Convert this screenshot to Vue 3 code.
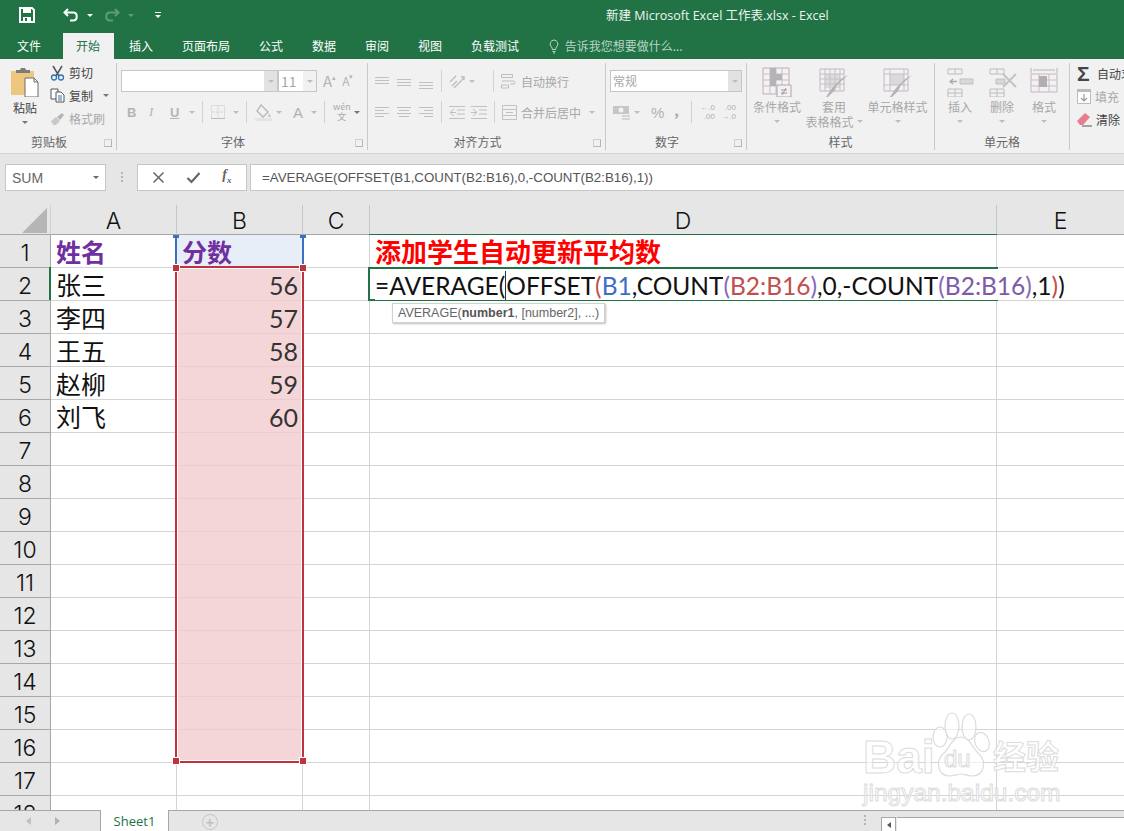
<script setup>
const tabs = ['插入', '页面布局', '公式', '数据', '审阅', '视图', '负载测试']
const columns = [
  { name: 'A', cls: 'col-a' },
  { name: 'B', cls: 'col-b' },
  { name: 'C', cls: 'col-c' },
  { name: 'D', cls: 'col-d' },
  { name: 'E', cls: 'col-e' },
]
const names = ['姓名', '张三', '李四', '王五', '赵柳', '刘飞']
const scores = ['分数', '56', '57', '58', '59', '60']
const rows = []
for (let i = 0; i < 18; i++) {
  rows.push({ num: i + 1, name: names[i] || '', score: scores[i] || '' })
}
const formula = [
  { t: '=AVERAGE(', c: 'k' },
  { t: 'OFFSET', c: 'k' },
  { t: '(', c: 'r' },
  { t: 'B1', c: 'b' },
  { t: ',COUNT', c: 'k' },
  { t: '(', c: 'p' },
  { t: 'B2:B16', c: 'r' },
  { t: ')', c: 'p' },
  { t: ',0,-COUNT', c: 'k' },
  { t: '(', c: 'p' },
  { t: 'B2:B16', c: 'r2' },
  { t: ')', c: 'p' },
  { t: ',1', c: 'k' },
  { t: ')', c: 'r' },
  { t: ')', c: 'k' },
]
</script>

<template>
  <div class="excel">
    <div class="titlebar">
      <svg class="qat save" width="16" height="16" viewBox="0 0 16 16">
        <path d="M1 1h12l2 2v12H1z" fill="none" stroke="#fff" stroke-width="2" />
        <path d="M4 1h8v5H4zM4 10h8v5H4z" fill="#fff" />
        <path d="M6 11h2v3H6z" fill="#217346" />
      </svg>
      <svg class="qat undo" width="16" height="14" viewBox="0 0 16 14">
        <path d="M5 1 1.500 4.500 5 8M2 4.500h8c5 0 5 8 0 8H7" fill="none" stroke="#fff" stroke-width="2" />
      </svg>
      <span class="tri white small-gap"></span>
      <svg class="qat redo" width="16" height="14" viewBox="0 0 16 14">
        <path d="M11 1l3.500 3.500L11 8M14 4.500H6c-5 0-5 8 0 8h3" fill="none" stroke="#5c9c7c" stroke-width="2" />
      </svg>
      <span class="tri dim small-gap"></span>
      <svg class="qat custom" width="8" height="8" viewBox="0 0 8 8">
        <path d="M1 1h6v1H1zM1 4h6L4 7z" fill="#fff" />
      </svg>
      <div class="doc-title">新建 Microsoft Excel 工作表.xlsx - Excel</div>
    </div>

    <div class="tabbar">
      <span class="tab file">文件</span>
      <span class="tab active">开始</span>
      <span v-for="t in tabs" :key="t" class="tab">{{ t }}</span>
      <svg class="bulb" width="10" height="15" viewBox="0 0 10 15">
        <path d="M5 1a4 4 0 0 0-2.500 7c.6.6.8 1.300.8 2.500h3.400c0-1.200.2-1.900.8-2.500A4 4 0 0 0 5 1zM3.500 12.500h3M4 14h2" fill="none" stroke="#b9d5c6" stroke-width="1" />
      </svg>
      <span class="tell">告诉我您想要做什么...</span>
    </div>

    <div class="ribbon">
      <div class="group g-clip">
        <div class="body clip-body">
          <div class="big paste">
            <svg width="30" height="30" viewBox="0 0 30 30">
              <path d="M1 4h23v24H1z" fill="#eec77f" />
              <path d="M6 3h4l1-2h4l1 2h4v3H6z" fill="#7b7b7b" />
              <path d="M15 11h9l4 4v15H15z" fill="#fff" stroke="#6d6d6d" />
              <path d="M24 11v4h4" fill="none" stroke="#6d6d6d" />
            </svg>
            <span class="t-on">粘贴</span>
            <span class="tri"></span>
          </div>
          <div class="clip-list">
            <div class="line">
              <svg width="15" height="16" viewBox="0 0 15 16">
                <path d="M3 1l6 10M12 1 6 11" stroke="#555" stroke-width="1.500" fill="none" />
                <circle cx="4" cy="12.500" r="2.500" fill="none" stroke="#2f74b5" stroke-width="1.300" />
                <circle cx="11" cy="12.500" r="2.500" fill="none" stroke="#2f74b5" stroke-width="1.300" />
              </svg>
              <span class="t-on">剪切</span>
            </div>
            <div class="line">
              <svg width="15" height="15" viewBox="0 0 15 15">
                <path d="M1 1h7v10H1z" fill="#fff" stroke="#555" />
                <path d="M6 4h5l3 3v7H6z" fill="#fff" stroke="#555" />
                <path d="M8 8h4M8 10h4M8 12h4" stroke="#2f74b5" />
              </svg>
              <span class="t-on">复制</span>
              <span class="tri copy-arrow"></span>
            </div>
            <div class="line">
              <svg width="15" height="14" viewBox="0 0 15 14">
                <path d="M1 9l5-4 4 4-4 4H3z" fill="#c9c9c9" />
                <path d="M7 5l5-4 2 2-4 5z" fill="#b4b4b4" />
              </svg>
              <span class="t-off">格式刷</span>
            </div>
          </div>
        </div>
        <div class="glabel side">剪贴板</div>
        <span class="launch"></span>
      </div>

      <div class="group g-font">
        <div class="body">
          <div class="row r1 font-r1">
            <div class="combo font-name"><span class="combo-text"></span><span class="combo-btn"><i class="tri off"></i></span></div>
            <div class="combo font-size"><span class="combo-text">11</span><span class="combo-btn plain"><i class="tri off"></i></span></div>
            <span class="glyph grow">A<sup>▴</sup></span>
            <span class="glyph shrink">A<sup>▾</sup></span>
          </div>
          <div class="row r2 font-r2">
            <b class="fmt">B</b>
            <i class="fmt serif">I</i>
            <u class="fmt">U</u>
            <span class="tri off"></span>
            <span class="sep"></span>
            <svg class="ico-border" width="14" height="14" viewBox="0 0 14 14">
              <path d="M.5.500h13v13H.5z" fill="none" stroke="#c8c8c8" stroke-dasharray="1 1" />
              <path d="M7 1v12M1 7h12" stroke="#c8c8c8" stroke-dasharray="1 1" />
              <path d="M0 13.500h14" stroke="#bdbdbd" />
            </svg>
            <span class="tri off"></span>
            <span class="sep"></span>
            <svg class="ico-fill" width="17" height="17" viewBox="0 0 17 17">
              <path d="M6 1l7 7-5 5-6-6z" fill="none" stroke="#b5b5b5" stroke-width="1.300" />
              <path d="M14 9l2 4h-3z" fill="#c4c4c4" />
              <path d="M0 14h17v3H0z" fill="#e4e4e4" />
            </svg>
            <span class="tri off"></span>
            <span class="font-a">A</span>
            <span class="tri off"></span>
            <span class="sep"></span>
            <span class="wen"><small>wén</small><small>文</small></span>
            <span class="tri"></span>
          </div>
        </div>
        <div class="glabel side">字体</div>
        <span class="launch"></span>
      </div>

      <div class="group g-align">
        <div class="body">
          <div class="row r1 align-r1">
            <svg class="al" width="14" height="8" viewBox="0 0 14 8"><path d="M0 .5h14M0 3.500h14M0 6.500h14" stroke="#c0c0c0" /></svg>
            <svg class="al mid" width="14" height="8" viewBox="0 0 14 8"><path d="M0 .5h14M0 3.500h14M0 6.500h14" stroke="#c0c0c0" /></svg>
            <svg class="al low" width="14" height="8" viewBox="0 0 14 8"><path d="M0 .5h14M0 3.500h14M0 6.500h14" stroke="#c0c0c0" /></svg>
            <span class="sep"></span>
            <svg width="17" height="15" viewBox="0 0 17 15"><path d="M1 8l6-6M3 12l5-5M5 14 15 4M12 3h3v3" fill="none" stroke="#bcbcbc" stroke-width="1.300" /></svg>
            <span class="tri off"></span>
            <span class="sep wide"></span>
            <svg width="16" height="15" viewBox="0 0 16 15"><path d="M.5.500h11v3H.5zM.5 11h7v3H.5z" fill="none" stroke="#bdbdbd" /><path d="M1 7h11c3 0 3 3 0 3H9" fill="none" stroke="#bdbdbd" /></svg>
            <span class="t-off">自动换行</span>
          </div>
          <div class="row r2 align-r2">
            <svg class="al" width="14" height="11" viewBox="0 0 14 11"><path d="M0 .5h14M0 3.500h9M0 6.500h14M0 9.500h9" stroke="#c0c0c0" /></svg>
            <svg class="al" width="14" height="11" viewBox="0 0 14 11"><path d="M0 .5h14M2 3.500h10M0 6.500h14M2 9.500h10" stroke="#c0c0c0" /></svg>
            <svg class="al" width="14" height="11" viewBox="0 0 14 11"><path d="M0 .5h14M5 3.500h9M0 6.500h14M5 9.500h9" stroke="#c0c0c0" /></svg>
            <span class="sep"></span>
            <svg width="16" height="13" viewBox="0 0 16 13"><path d="M0 .5h16M8 4h8M8 8h8M0 12.500h16M5 3 1 6.500 5 10M1 6.500h6" fill="none" stroke="#c0c0c0" /></svg>
            <svg width="16" height="13" viewBox="0 0 16 13"><path d="M0 .5h16M8 4h8M8 8h8M0 12.500h16M2 3l4 3.500L2 10M0 6.500h6" fill="none" stroke="#c0c0c0" /></svg>
            <span class="sep wide2"></span>
            <svg width="15" height="15" viewBox="0 0 15 15"><path d="M.5.500h14v14H.5zM1 4.500h13M1 10.500h13M4 7.500h7" fill="none" stroke="#c2c2c2" /></svg>
            <span class="t-off">合并后居中</span>
            <span class="tri off far"></span>
          </div>
        </div>
        <div class="glabel side">对齐方式</div>
        <span class="launch"></span>
      </div>

      <div class="group g-num">
        <div class="body">
          <div class="row r1 num-r1">
            <div class="combo num-fmt"><span class="combo-text t-off">常规</span><span class="combo-btn"><i class="tri off"></i></span></div>
          </div>
          <div class="row r2 num-r2">
            <svg width="17" height="15" viewBox="0 0 17 15"><path d="M0 1h16v8H0z" fill="#c6c6c6" /><circle cx="8" cy="5" r="2.500" fill="#f1f1f1" /><path d="M9 10h8v2H9zM9 13h8v2H9z" fill="#d4d4d4" /></svg>
            <span class="tri off"></span>
            <span class="pct">%</span>
            <span class="comma">,</span>
            <span class="sep"></span>
            <span class="dec"><small>←.0</small><small>.00</small></span>
            <span class="dec"><small>.00</small><small>→.0</small></span>
          </div>
        </div>
        <div class="glabel side">数字</div>
        <span class="launch"></span>
      </div>

      <div class="group g-style">
        <div class="body big-row">
          <div class="big b-cond">
            <svg width="30" height="30" viewBox="0 0 30 30">
              <path d="M1 1h26v26H1z" fill="#f4f0f4" stroke="#b8b0b8" />
              <path d="M1 7h26M1 13h26M1 19h26M8 1v26M14 1v26M20 1v26" stroke="#c6bfc6" />
              <path d="M8 1h6v6H8zM8 7h12v6H8zM8 13h6v6H8z" fill="#b4b4b4" />
              <path d="M15 18h14v12H15z" fill="#f4f0f4" stroke="#a8a8a8" />
              <path d="M19 23h6M19 26h6M24 21l-4 7" stroke="#999" />
            </svg>
            <span class="t-off">条件格式</span>
            <span class="tri off"></span>
          </div>
          <div class="big b-table">
            <svg width="30" height="30" viewBox="0 0 30 30">
              <path d="M1 2h24v22H1z" fill="#f4f0f4" stroke="#c0b8c0" />
              <path d="M6 7h15v14H6z" fill="#dcdcdc" />
              <path d="M1 7h24M1 12h24M1 17h24M6 2v22M11 2v22M16 2v22M21 2v22" stroke="#c6bfc6" />
              <path d="M29 8 18 18l-3 6-6 6h-2l6-9 9-9z" fill="#b4b4b4" />
            </svg>
            <span class="t-off">套用</span>
            <span class="t-off table-2">表格格式<i class="tri off"></i></span>
          </div>
          <div class="big b-cell">
            <svg width="30" height="30" viewBox="0 0 30 30">
              <path d="M1 2h24v22H1z" fill="#f4f0f4" stroke="#c0b8c0" />
              <path d="M7 7h14v11H7z" fill="#dcd8dc" />
              <path d="M1 7h24M1 18h24M7 2v22M21 2v22" stroke="#c6bfc6" />
              <path d="M29 8 18 18l-3 6-6 6h-2l6-9 9-9z" fill="#b4b4b4" />
            </svg>
            <span class="t-off">单元格样式</span>
            <span class="tri off"></span>
          </div>
        </div>
        <div class="glabel">样式</div>
      </div>

      <div class="group g-cells">
        <div class="body big-row cells-row">
          <div class="big cell-btn">
            <svg width="30" height="30" viewBox="0 0 30 30">
              <path d="M3 2h14v5H3zM3 22h14v8H3zM10 2v5M10 22v8M3 26h14" fill="none" stroke="#c0bac0" />
              <path d="M15 12h13v5H15z" fill="#d8d8d8" stroke="#bfbfbf" />
              <path d="M12 14.500H5M8 12l-3 2.500L8 17" fill="none" stroke="#aaa" stroke-width="1.300" />
            </svg>
            <span class="t-off">插入</span>
            <span class="tri off"></span>
          </div>
          <div class="big cell-btn">
            <svg width="30" height="30" viewBox="0 0 30 30">
              <path d="M3 2h14v5H3zM3 22h14v8H3zM10 2v5M10 22v8M3 26h14" fill="none" stroke="#c0bac0" />
              <path d="M9 12h9v5H9z" fill="#d8d8d8" stroke="#bfbfbf" />
              <path d="M16 7l13 13M29 7 16 20" stroke="#c4c4c4" stroke-width="2" />
            </svg>
            <span class="t-off">删除</span>
            <span class="tri off"></span>
          </div>
          <div class="big cell-btn">
            <svg width="30" height="30" viewBox="0 0 30 30">
              <path d="M2 1v5M28 1v5M4 3h22" stroke="#b4b4b4" />
              <path d="M2 7h26v18H2z" fill="#f4f0f4" stroke="#c0b8c0" />
              <path d="M2 13h26M2 19h26M10 7v18M20 7v18" stroke="#c6bfc6" />
              <path d="M10 9h8v11h-8z" fill="#b0b0b0" />
            </svg>
            <span class="t-off">格式</span>
            <span class="tri off"></span>
          </div>
        </div>
        <div class="glabel">单元格</div>
      </div>

      <div class="group g-edit">
        <div class="edit-list">
          <div class="line">
            <span class="sigma">Σ</span>
            <span class="t-on">自动求和</span>
          </div>
          <div class="line">
            <svg width="14" height="15" viewBox="0 0 14 15"><path d="M.5.500h13v14H.5z" fill="#fff" stroke="#bbb" /><path d="M0 0h14v3H0z" fill="#bbb" /><path d="M7 5v7M4 9l3 3 3-3" fill="none" stroke="#999" stroke-width="1.200" /></svg>
            <span class="t-off">填充</span>
          </div>
          <div class="line">
            <svg width="15" height="14" viewBox="0 0 15 14"><path d="M0 8l8-8 5 4-7 8H3z" fill="#e87d8e" /><path d="M5 13h10" stroke="#555" /></svg>
            <span class="t-on">清除</span>
          </div>
        </div>
      </div>
    </div>

    <div class="formula-zone">
      <div class="namebox"><span>SUM</span><i class="tri dark"></i></div>
      <div class="grip"></div>
      <div class="fx-box">
        <svg width="13" height="13" viewBox="0 0 13 13"><path d="M1.500 1.500l10 10M11.500 1.500l-10 10" stroke="#666" stroke-width="1.500" /></svg>
        <svg width="15" height="13" viewBox="0 0 15 13"><path d="M1.500 7l4 4 8-9" fill="none" stroke="#666" stroke-width="2.200" /></svg>
        <span class="fx">f<sub>x</sub></span>
      </div>
      <div class="formula-input">
        <span>=AVERAGE(OFFSET(B1,COUNT(B2:B16),0,-COUNT(B2:B16),1))</span>
      </div>
    </div>

    <div class="sheet">
      <div class="head-row">
        <div class="corner"><span class="corner-tri"></span></div>
        <div v-for="c in columns" :key="c.name" class="col-head" :class="c.cls">{{ c.name }}</div>
      </div>
      <div v-for="r in rows" :key="r.num" class="data-row">
        <div class="row-head">{{ r.num }}</div>
        <div class="cell col-a" :class="{ head: r.num === 1 }">{{ r.name }}</div>
        <div class="cell col-b" :class="{ head: r.num === 1, 'in-blue': r.num === 1, num: r.num > 1, 'in-red': r.num > 1 && r.num < 17 }">{{ r.score }}</div>
        <div class="cell col-c"></div>
        <div class="cell col-d" :class="{ caption: r.num === 1 }">{{ r.num === 1 ? '添加学生自动更新平均数' : '' }}</div>
        <div class="cell col-e"></div>
      </div>

      <div class="range-blue">
        <i class="h tl"></i><i class="h tr"></i>
      </div>
      <div class="range-red">
        <i class="h tl"></i><i class="h tr"></i><i class="h bl"></i><i class="h br"></i>
      </div>
      <div class="row-mark"></div>
      <div class="d-top"></div>
      <div class="editor">
        <span v-for="(f, i) in formula" :key="i" :class="['f-' + f.c, { caret: i === 1 }]">{{ f.t }}</span>
      </div>
      <div class="tip">AVERAGE(<b>number1</b>, [number2], ...)</div>

      <div class="watermark">
        <svg class="paw" width="62" height="66" viewBox="0 0 62 66">
          <g fill="rgba(255,255,255,.6)" stroke="#dcdcdc" stroke-width="1.200">
            <ellipse cx="10" cy="25" rx="7" ry="10" />
            <ellipse cx="22" cy="14" rx="7" ry="13" />
            <ellipse cx="39" cy="15" rx="7" ry="13" />
            <ellipse cx="52" cy="30" rx="7" ry="10" transform="rotate(-20 52 30)" />
            <path d="M31 25C22 25 20 36 13 42 5 50 8 64 20 64c5 0 7-2 11-2s6 2 11 2c12 0 15-14 7-22-7-6-9-17-18-17z" />
          </g>
        </svg>
        <span class="wm-bai">Bai</span>
        <span class="wm-du">du</span>
        <span class="wm-cn">经验</span>
        <span class="wm-url">jingyan.baidu.com</span>
      </div>
    </div>

    <div class="sheet-bar">
      <div class="nav"><span class="nav-l"></span><span class="nav-r"></span></div>
      <div class="sheet-tab">Sheet1</div>
      <div class="add"><span>+</span></div>
      <div class="bar-grip"></div>
      <div class="hscroll"><span class="left-btn"><i></i></span><span class="thumb"></span></div>
    </div>
  </div>
</template>

<style scoped>
.excel {
  width: 1124px;
  height: 831px;
  overflow: hidden;
  display: flex;
  flex-direction: column;
  background: #fff;
  font-family: "Noto Sans CJK SC", "Liberation Sans", sans-serif;
  font-size: 12px;
  position: relative;
}

/* title + tabs */
.titlebar {
  height: 33px;
  box-sizing: border-box;
  padding-bottom: 3px;
  background: #217346;
  display: flex;
  align-items: center;
  color: #fff;
  flex: none;
}
.qat { flex: none; }
.save { margin-left: 19px; }
.undo { margin-left: 28px; }
.redo { margin-left: 11px; }
.custom { margin-left: 20px; }
.small-gap { margin-left: 8px; }
.doc-title {
  margin-left: 444px;
  margin-bottom: 1px;
  font-family: "Open Sans", "Noto Sans CJK SC", sans-serif;
  font-size: 12.500px;
  white-space: nowrap;
  color: #eef5f1;
}
.tabbar {
  height: 26px;
  background: #217346;
  display: flex;
  align-items: stretch;
  flex: none;
  color: #fff;
  line-height: 25px;
}
.tab { padding: 0 14.500px; }
.tab.file { margin-left: 2.500px; margin-right: 7px; }
.tab.active {
  background: #f1f1f1;
  color: #217346;
  padding: 0 13.500px;
  margin-right: 1px;
  width: 51px;
  box-sizing: border-box;
}
.bulb { margin: 6px 6px 0 15px; }
.tell { color: #b9d5c6; }

/* ribbon */
.ribbon {
  height: 94px;
  flex: none;
  background: #f1f1f1;
  display: flex;
  color: #444;
  border-bottom: 1px solid #d4d4d4;
  box-sizing: content-box;
}
.group {
  position: relative;
  flex: none;
  box-sizing: border-box;
  height: 87px;
  margin-top: 4px;
  border-right: 1px solid #c8c8c8;
}
.body {
  height: 70px;
  box-sizing: border-box;
  display: flow-root;
}
.glabel {
  text-align: center;
  color: #666;
  line-height: 17px;
  white-space: nowrap;
}
.glabel.side { padding-right: 18px; }
.launch {
  position: absolute;
  right: 4px;
  bottom: 3px;
  width: 6px;
  height: 6px;
  border: 1px solid #b5b5b5;
  border-top-color: #d0d0d0;
  border-left-color: #d0d0d0;
}
.g-clip { width: 117px; }
.g-font { width: 251px; }
.g-align { width: 238px; }
.g-num { width: 141px; }
.g-style { width: 188px; }
.g-cells { width: 135px; }
.g-edit { flex: 1; border-right: none; }

.t-on { color: #444; white-space: nowrap; }
.t-off { color: #a8a8a8; white-space: nowrap; }

.tri {
  display: inline-block;
  flex: none;
  width: 0;
  height: 0;
  border-left: 3.500px solid transparent;
  border-right: 3.500px solid transparent;
  border-top: 3.500px solid #777;
}
.tri.off { border-top-color: #bdbdbd; }
.tri.white { border-top-color: #fff; }
.tri.dim { border-top-color: #5c9c7c; }
.tri.dark { border-top-color: #666; }

.big {
  display: flex;
  flex-direction: column;
  align-items: center;
  flex: none;
  line-height: 15px;
}
.big svg { height: 30px; margin-bottom: 2px; flex: none; }
.big .tri { margin-top: 6px; }
.big-row { display: flex; padding-top: 4px; }

.clip-body { display: flex; padding-top: 4px; }
.paste { width: 50px; }
.paste svg { margin-bottom: 3px; }
.clip-list { margin-top: -6px; }
.line {
  display: flex;
  align-items: center;
  gap: 4px;
  height: 23px;
}
.copy-arrow { margin-left: 6px; }

.row { display: flex; align-items: center; }
.r1 { height: 22px; margin-top: 7px; }
.r2 { height: 22px; margin-top: 9px; }

.combo {
  display: flex;
  height: 22px;
  box-sizing: border-box;
  border: 1px solid #c6c6c6;
  background: #fff;
  align-items: center;
  flex: none;
}
.combo-text { flex: 1; padding-left: 2px; color: #a8a8a8; font-size: 14px; line-height: 20px; overflow: hidden; }
.combo-btn {
  width: 13px;
  align-self: stretch;
  background: #e2e2e2;
  display: flex;
  align-items: center;
  justify-content: center;
}
.combo-btn.plain { background: #f1f1f1; }

.font-r1 { padding-left: 4px; }
.font-name { width: 157px; }
.font-size { width: 39px; }
.glyph { color: #b4b4b4; line-height: 20px; }
.glyph sup { font-size: 7px; vertical-align: 7px; line-height: 0; }
.grow { font-size: 15px; margin-left: 6px; }
.shrink { font-size: 12px; margin-left: 6px; }

.font-r2 { padding-left: 10px; }
.fmt {
  color: #b4b4b4;
  font-family: "Liberation Sans", sans-serif;
  font-size: 13px;
  width: 9px;
  font-weight: bold;
  margin-right: 13px;
}
.fmt.serif { font-family: "Liberation Serif", serif; font-weight: normal; font-style: italic; width: 8px; }
.font-r2 u { margin-right: 10px; }
.sep {
  width: 1px;
  height: 22px;
  background: #d2d2d2;
  margin: 0 8px 0 7px;
  flex: none;
}
.ico-border { margin-right: 8px; flex: none; }
.ico-fill { margin-right: 4px; flex: none; }
.font-a {
  color: #b0b0b0;
  font-size: 15px;
  font-family: "Liberation Sans", sans-serif;
  margin: 0 8px 0 11px;
}
.wen {
  display: flex;
  flex-direction: column;
  align-items: center;
  color: #a8a8a8;
  line-height: 10px;
  margin-right: 3px;
}
.wen small { font-size: 9px; }

.align-r1 { padding-left: 7px; }
.align-r2 { padding-left: 7px; }
.al { margin-right: 8px; flex: none; }
.al.mid { margin-top: 3px; }
.al.low { margin-top: 9px; }
.align-r1 .sep { margin-left: 0; margin-right: 7px; }
.align-r1 .tri { margin-left: 3px; }
.sep.wide { margin-left: 18px !important; }
.align-r1 .t-off, .align-r2 .t-off { margin-left: 4px; }
.align-r2 .sep { margin-left: 0; margin-right: 7px; }
.align-r2 svg + svg:not(.al) { margin-left: 6px; }
.sep.wide2 { margin-left: 7px !important; }
.tri.far { margin-left: 8px; }

.num-r1 { padding-left: 4px; }
.num-fmt { width: 132px; }
.num-fmt .combo-text { font-size: 12px; }
.num-r2 { padding-left: 7px; }
.num-r2 .tri { margin-left: 4px; }
.pct { color: #b0b0b0; font-size: 15px; margin-left: 11px; font-family: "Liberation Sans", sans-serif; }
.comma { color: #a8a8a8; font-size: 14px; font-weight: bold; margin: 0 0 4px 10px; }
.num-r2 .sep { margin: 0 8px 0 12px; }
.dec {
  display: flex;
  flex-direction: column;
  align-items: flex-end;
  width: 15px;
  color: #b0b0b0;
  line-height: 9px;
  margin-right: 6px;
}
.dec small { font-size: 8px; white-space: nowrap; font-family: "Liberation Sans", sans-serif; }

.b-cond { width: 60px; }
.b-table { width: 54px; }
.b-cell { width: 73px; }
.table-2 { display: flex; align-items: center; }
.table-2 .tri { margin: 0 0 0 3px; }
.cells-row { padding-left: 4px; }
.cell-btn { width: 42px; }

.edit-list { margin-top: -1px; padding-left: 7px; }
.sigma {
  font-size: 21px;
  font-weight: bold;
  color: #444;
  font-family: "Liberation Sans", sans-serif;
  width: 16px;
  line-height: 20px;
}
.edit-list .line { white-space: nowrap; }

/* formula bar */
.formula-zone {
  height: 50px;
  background: #e6e6e6;
  flex: none;
  display: flex;
  align-items: flex-start;
  padding-top: 10px;
  box-sizing: border-box;
}
.namebox {
  width: 101px;
  height: 27px;
  margin-left: 5px;
  box-sizing: border-box;
  background: #fff;
  border: 1px solid #c6c6c6;
  display: flex;
  align-items: center;
  justify-content: space-between;
  padding: 0 6px;
  font-family: "Liberation Sans", sans-serif;
  font-size: 14px;
  color: #666;
}
.grip {
  width: 2px;
  height: 11px;
  margin: 8px 14px 0 15px;
  background: repeating-linear-gradient(#b5b5b5 0 2px, transparent 2px 4px);
}
.fx-box {
  width: 110px;
  height: 27px;
  box-sizing: border-box;
  background: #fff;
  border: 1px solid #c6c6c6;
  display: flex;
  align-items: center;
  justify-content: space-around;
  padding: 0 4px;
  margin-right: 3px;
}
.fx {
  font-family: "Liberation Serif", serif;
  font-style: italic;
  font-weight: bold;
  font-size: 14px;
  color: #666;
  line-height: 14px;
}
.fx sub { font-size: 9px; }
.formula-input {
  flex: 1;
  height: 27px;
  box-sizing: border-box;
  background: #fff;
  border: 1px solid #c6c6c6;
  border-right: none;
  padding-left: 11px;
  font-family: "Liberation Sans", sans-serif;
  font-size: 13.300px;
  line-height: 25px;
  color: #555;
  white-space: nowrap;
}

/* sheet */
.sheet {
  position: relative;
  flex: none;
  height: 606px;
  overflow: hidden;
  background: #fff;
  font-family: "Lato", "Noto Sans CJK SC", sans-serif;
  color: #111;
}
.head-row, .data-row { display: flex; }
.head-row { height: 31px; background: #e6e6e6; border-top: 1px solid #e6e6e6; box-sizing: border-box; }
.corner, .row-head {
  width: 51px;
  flex: none;
  box-sizing: border-box;
  background: #e6e6e6;
  border-right: 1px solid #a6a6a6;
}
.corner {
  position: relative;
  border-right: 1px solid #d0d0d0;
  border-bottom: 1px solid #a6a6a6;
}
.corner-tri {
  position: absolute;
  right: 3px;
  bottom: 1px;
  width: 0;
  height: 0;
  border-left: 25px solid transparent;
  border-bottom: 25px solid #b5b5b5;
}
.col-a { width: 126px; }
.col-b { width: 126px; }
.col-c { width: 67px; }
.col-d { width: 627px; }
.col-e { width: 128px; }
.col-head {
  flex: none;
  box-sizing: border-box;
  border-right: 1px solid #c6c6c6;
  border-bottom: 1px solid #a6a6a6;
  text-align: center;
  font-size: 23px;
  line-height: 32px;
  font-family: "Inter", "Liberation Sans", sans-serif;
  font-weight: 300;
}
.col-d.col-head { border-bottom: 1px solid #217346; }
.data-row { height: 33px; }
.row-head {
  border-bottom: 1px solid #a6a6a6;
  text-align: center;
  font-size: 23px;
  line-height: 36px;
  font-family: "Inter", "Liberation Sans", sans-serif;
  font-weight: 300;
}
.cell {
  flex: none;
  box-sizing: border-box;
  border-right: 1px solid #d4d4d4;
  border-bottom: 1px solid #d4d4d4;
  padding: 0 5px;
  font-size: 25px;
  line-height: 34px;
  white-space: nowrap;
}
.cell.head { color: #7030a0; font-weight: 700; }
.cell.num { text-align: right; color: #333; padding-right: 4px; line-height: 35px; }
.cell.in-blue { background: #e8eef8; }
.cell.in-red { background: #f4d6d9; border-bottom-color: #ebcdd0; }
.caption { color: #f00; font-weight: 700; font-size: 26px; }

/* selection overlays */
.range-blue {
  position: absolute;
  left: 175px;
  top: 31px;
  width: 129px;
  height: 32px;
  box-sizing: border-box;
  border-left: 2px solid #3a6fc4;
  border-right: 2px solid #3a6fc4;
  z-index: 2;
}
.range-red {
  position: absolute;
  left: 175px;
  top: 62px;
  width: 129px;
  height: 497px;
  box-sizing: border-box;
  border: 2px solid #c0323e;
  z-index: 2;
  box-shadow: inset 0 0 0 1px #fff;
}
.h {
  position: absolute;
  width: 6px;
  height: 6px;
  background: #c0323e;
  outline: 1px solid #fff;
}
.h.tl { left: -4px; top: -3px; }
.h.tr { right: -4px; top: -3px; }
.h.bl { left: -4px; bottom: -3px; }
.h.br { right: -4px; bottom: -3px; }
.range-blue .h { background: #3a6fc4; height: 3px; top: 0; outline: none; }
.row-mark {
  position: absolute;
  left: 49px;
  top: 63px;
  width: 2px;
  height: 33px;
  background: #217346;
}
.d-top {
  position: absolute;
  left: 369px;
  top: 30px;
  width: 628px;
  height: 1px;
  background: #217346;
}
.editor {
  position: absolute;
  left: 368px;
  top: 63px;
  width: 630px;
  height: 34px;
  box-sizing: border-box;
  border: 2px solid #217346;
  border-right: none;
  background: #fff;
  padding-left: 5px;
  font-size: 24.500px;
  line-height: 33px;
  white-space: nowrap;
  z-index: 3;
  overflow: visible;
}
.editor span { background: #fff; }
.caret { border-left: 1px solid #333; }
.f-k { color: #111; }
.f-r { color: #c0504d; }
.f-r2 { color: #7d5ba6; }
.f-b { color: #3a6fc4; }
.f-p { color: #8a68b8; }
.tip {
  position: absolute;
  left: 392px;
  top: 99px;
  height: 20px;
  box-sizing: border-box;
  background: #fff;
  border: 1px solid #d0d0d0;
  box-shadow: 1px 1px 2px #bdbdbd;
  padding: 0 5px;
  font-family: "Liberation Sans", sans-serif;
  font-size: 12.500px;
  line-height: 18px;
  color: #666;
  z-index: 4;
  white-space: nowrap;
}
.tip b { color: #555; }

.watermark {
  position: absolute;
  left: 863px;
  top: 503px;
  width: 200px;
  height: 100px;
  z-index: 1;
}
.paw { position: absolute; left: 67px; top: 5px; }
.wm-bai, .wm-du, .wm-cn, .wm-url {
  position: absolute;
  white-space: nowrap;
  color: rgba(255, 255, 255, 0.6);
  -webkit-text-stroke: 1px #dcdcdc;
  font-family: "Liberation Sans", sans-serif;
  font-weight: bold;
}
.wm-bai { left: 0; top: 25px; font-size: 46px; line-height: 50px; }
.wm-du { left: 81px; top: 38px; font-size: 24px; line-height: 28px; font-weight: normal; }
.wm-cn { left: 130px; top: 28px; font-size: 33px; line-height: 40px; font-family: "Noto Sans CJK SC", sans-serif; }
.wm-url { left: 0; top: 72px; font-size: 24.500px; line-height: 28px; font-weight: normal; }

/* bottom bar */
.sheet-bar {
  height: 21px;
  flex: none;
  box-sizing: border-box;
  background: #e6e6e6;
  border-top: 1px solid #a6a6a6;
  display: flex;
  align-items: flex-start;
  position: relative;
  z-index: 5;
}
.nav { width: 100px; display: flex; gap: 24px; padding: 6px 0 0 26px; box-sizing: border-box; flex: none; }
.nav-l, .nav-r { width: 0; height: 0; border-top: 4px solid transparent; border-bottom: 4px solid transparent; }
.nav-l { border-right: 5px solid #c0c0c0; }
.nav-r { border-left: 5px solid #b0b0b0; }
.sheet-tab {
  width: 69px;
  height: 21px;
  margin-top: -1px;
  box-sizing: border-box;
  background: #fff;
  border-left: 1px solid #a6a6a6;
  border-right: 1px solid #a6a6a6;
  color: #217346;
  text-align: center;
  font-family: "Open Sans", sans-serif;
  font-size: 13px;
  line-height: 23px;
  flex: none;
}
.add {
  margin: 3px 0 0 33px;
  width: 14px;
  height: 14px;
  border: 1.500px solid #c6c6c6;
  border-radius: 50%;
  display: flex;
  align-items: center;
  justify-content: center;
  color: #c0c0c0;
  font-size: 14px;
  font-weight: bold;
  line-height: 14px;
  flex: none;
}
.bar-grip {
  width: 2px;
  height: 11px;
  margin: 4px 0 0 646px;
  background: repeating-linear-gradient(#b5b5b5 0 2px, transparent 2px 4px);
  flex: none;
}
.hscroll { margin: 6px 0 0 15px; display: flex; flex: 1; height: 14px; }
.left-btn {
  width: 15px;
  height: 14px;
  background: #fff;
  border: 1px solid #a6a6a6;
  border-bottom: none;
  box-sizing: border-box;
  display: flex;
  align-items: center;
  justify-content: center;
}
.left-btn i {
  width: 0;
  height: 0;
  border-top: 3px solid transparent;
  border-bottom: 3px solid transparent;
  border-right: 4px solid #555;
}
.thumb { flex: 1; background: #fff; border-top: 1px solid #a6a6a6; box-sizing: border-box; margin-left: 1px; }
</style>
